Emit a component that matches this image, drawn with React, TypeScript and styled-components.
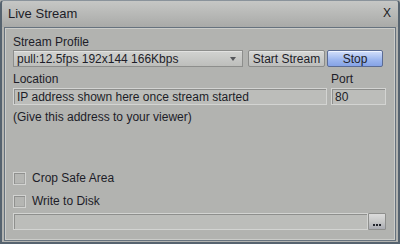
import styled, { createGlobalStyle } from "styled-components";

const GlobalStyle = createGlobalStyle`
  html, body {
    margin: 0;
    padding: 0;
    background: #b2b3b0;
  }
  body {
    font-family: "Liberation Sans", Arial, sans-serif;
    font-size: 12px;
    color: #1d1d28;
  }
`;

const Window = styled.div`
  width: 400px;
  height: 244px;
  box-sizing: border-box;
  display: flex;
  flex-direction: column;
  background: #b2b3b0;
  border: 2px solid #56636f;
  border-top: 1px solid #8a939b;
  border-radius: 4px 4px 0 0;
  overflow: hidden;
`;

const TitleBar = styled.div`
  height: 26px;
  flex: none;
  display: flex;
  align-items: center;
  justify-content: space-between;
  padding: 0 7px 2px 6px;
  box-sizing: border-box;
  background: linear-gradient(#c6c7c5, #a9aaa8);
  font-size: 13px;
`;

const Close = styled.span`
  font-size: 12px;
  color: #1a1a22;
`;

const Panel = styled.div`
  flex: 1;
  margin: 0 2px 1px 2px;
  padding: 7px 9px 0 8px;
  border: 1px solid #66727e;
  box-shadow: inset 0 0 0 1px #cbccc9;
  display: flex;
  flex-direction: column;
`;

const Label = styled.div<{ $top?: number }>`
  line-height: 14px;
  margin-top: ${(p) => p.$top ?? 0}px;
`;

const Row = styled.div<{ $top?: number; $gap?: number }>`
  display: flex;
  gap: ${(p) => p.$gap ?? 4}px;
  margin-top: ${(p) => p.$top ?? 0}px;
`;

const Select = styled.div`
  width: 230px;
  height: 17px;
  box-sizing: border-box;
  display: flex;
  align-items: center;
  justify-content: space-between;
  padding: 0 4px 0 3px;
  border: 1px solid #8d8e8c;
  background: linear-gradient(#d2d3d1, #bdbebb);
  box-shadow: inset 0 1px 0 #e2e2e0;
`;

const Arrow = styled.span`
  width: 0;
  height: 0;
  border-left: 3px solid transparent;
  border-right: 3px solid transparent;
  border-top: 4px solid #55575a;
  margin-right: 2px;
`;

const Button = styled.div<{ $primary?: boolean; $w: number }>`
  width: ${(p) => p.$w}px;
  height: 17px;
  box-sizing: border-box;
  display: flex;
  align-items: center;
  justify-content: center;
  border-radius: 2px;
  border: 1px solid ${(p) => (p.$primary ? "#5b6c94" : "#8b8c8a")};
  background: ${(p) =>
    p.$primary
      ? "linear-gradient(#d4e0fb, #9cb6ee 60%, #86a3e6)"
      : "linear-gradient(#d7d8d6, #bdbebc)"};
  box-shadow: inset 0 1px 0 ${(p) => (p.$primary ? "#eef3ff" : "#e4e4e2")};
`;

const Field = styled.div<{ $w?: number }>`
  ${(p) => (p.$w ? `width: ${p.$w}px;` : "flex: 1;")}
  height: 17px;
  box-sizing: border-box;
  display: flex;
  align-items: center;
  padding-left: 3px;
  border: 1px solid #d3d4d2;
  box-shadow: inset 1px 1px 0 #8e8f8d;
  background: #bcbdba;
`;

const PortCol = styled.div`
  width: 55px;
`;

const CheckRow = styled.label<{ $top: number }>`
  display: flex;
  align-items: center;
  gap: 6px;
  height: 14px;
  margin-top: ${(p) => p.$top}px;
`;

const Box = styled.span`
  width: 13px;
  height: 13px;
  box-sizing: border-box;
  border: 1px solid #d2d3d1;
  box-shadow: inset 1px 1px 0 #8f908e, inset -1px -1px 0 #a3a4a2;
  background: #b5b6b3;
`;

const Browse = styled.div`
  width: 18px;
  height: 17px;
  box-sizing: border-box;
  display: flex;
  align-items: flex-end;
  justify-content: center;
  gap: 1px;
  padding-bottom: 3px;
  border: 1px solid #8e8f8d;
  border-radius: 1px;
  background: linear-gradient(#dcdcdc, #c7c8c8 50%, #a9abb2);
`;

const Dot = styled.span`
  width: 2px;
  height: 2px;
  background: #22242c;
`;

export default function App() {
  return (
    <>
      <GlobalStyle />
      <Window>
        <TitleBar>
          <span>Live Stream</span>
          <Close>X</Close>
        </TitleBar>
        <Panel>
          <Label>Stream Profile</Label>
          <Row $top={1} $gap={0}>
            <Select>
              <span>pull:12.5fps 192x144 166Kbps</span>
              <Arrow />
            </Select>
            <Button $w={77} style={{ marginLeft: 5 }}>Start Stream</Button>
            <Button $w={56} $primary style={{ marginLeft: 2 }}>Stop</Button>
          </Row>
          <Row $top={5}>
            <Label style={{ flex: 1 }}>Location</Label>
            <PortCol>
              <Label>Port</Label>
            </PortCol>
          </Row>
          <Row $top={2}>
            <Field>IP address shown here once stream started</Field>
            <Field $w={55}>80</Field>
          </Row>
          <Label $top={5}>(Give this address to your viewer)</Label>
          <CheckRow $top={47}>
            <Box />
            Crop Safe Area
          </CheckRow>
          <CheckRow $top={9}>
            <Box />
            Write to Disk
          </CheckRow>
          <Row $top={5} $gap={0}>
            <Field />
            <Browse>
              <Dot />
              <Dot />
              <Dot />
            </Browse>
          </Row>
        </Panel>
      </Window>
    </>
  );
}
